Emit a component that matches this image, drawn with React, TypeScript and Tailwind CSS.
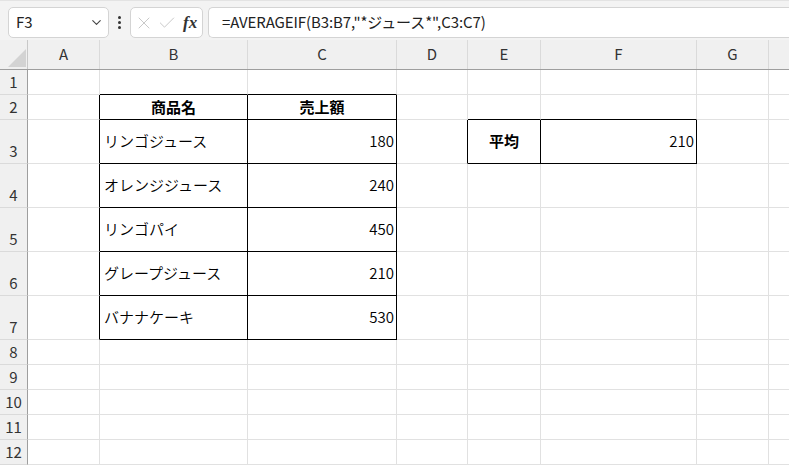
import { ChevronDown, X, Check } from "lucide-react";

const COLS = ["A", "B", "C", "D", "E", "F", "G", ""];
const COL_W = [72, 148, 149, 71, 73, 156, 72, 40];
const ROW_H = [25, 25, 44, 44, 44, 44, 44, 25, 25, 25, 25, 25];

type Cell = { text: string; align: "left" | "right" | "center"; bold?: boolean };

const DATA: Record<string, Cell> = {
  "B2": { text: "商品名", align: "center", bold: true },
  "C2": { text: "売上額", align: "center", bold: true },
  "B3": { text: "リンゴジュース", align: "left" },
  "C3": { text: "180", align: "right" },
  "B4": { text: "オレンジジュース", align: "left" },
  "C4": { text: "240", align: "right" },
  "B5": { text: "リンゴパイ", align: "left" },
  "C5": { text: "450", align: "right" },
  "B6": { text: "グレープジュース", align: "left" },
  "C6": { text: "210", align: "right" },
  "B7": { text: "バナナケーキ", align: "left" },
  "C7": { text: "530", align: "right" },
  "E3": { text: "平均", align: "center", bold: true },
  "F3": { text: "210", align: "right" },
};

// boxes with thin black borders: [colStart, colEnd, rowStart, rowEnd] (0-based col, 1-based row)
const BOXES = [
  [1, 2, 2, 7],
  [4, 5, 3, 3],
];

function inBox(c: number, r: number) {
  return BOXES.some(([c0, c1, r0, r1]) => c >= c0 && c <= c1 && r >= r0 && r <= r1);
}

function Toolbar() {
  return (
    <div className="flex h-[40px] items-start border-t border-[#e3e3e3] bg-[#f3f3f3] pt-[6px]">
      <div className="ml-[8px] flex h-[31px] w-[101px] items-center justify-between rounded-[5px] border border-[#d4d4d4] bg-white pl-[7px] pr-[4px]">
        <span className="text-[15px] text-[#222]">F3</span>
        <ChevronDown className="h-[15px] w-[15px] text-[#444]" strokeWidth={1.8} />
      </div>
      <div className="flex h-[31px] w-[21px] flex-col items-center justify-center gap-[2px]">
        <span className="h-[3px] w-[3px] rounded-full bg-[#333]" />
        <span className="h-[3px] w-[3px] rounded-full bg-[#333]" />
        <span className="h-[3px] w-[3px] rounded-full bg-[#333]" />
      </div>
      <div className="flex h-[31px] w-[73px] items-center gap-[3px] rounded-[5px] border border-[#d4d4d4] bg-white pl-[3px]">
        <X className="h-[20px] w-[20px] text-[#c4c4c4]" strokeWidth={1.1} />
        <Check className="h-[20px] w-[20px] text-[#c4c4c4]" strokeWidth={1.1} />
        <span className="ml-[3px] font-['Liberation_Serif',serif] text-[17px] font-bold italic text-[#333]">fx</span>
      </div>
      <div className="ml-[5px] flex h-[31px] flex-1 items-center rounded-l-[5px] border border-r-0 border-[#d4d4d4] bg-white pl-[13px]">
        <span className="text-[15px] tracking-[-0.1px] text-[#222]">=AVERAGEIF(B3:B7,"*ジュース*",C3:C7)</span>
      </div>
    </div>
  );
}

function ColumnHeader() {
  return (
    <div className="flex h-[30px] border-b border-[#9e9e9e] bg-[#f0f0f0]">
      <div className="relative w-[28px] shrink-0 border-r border-[#c8c8c8]">
        <svg className="absolute left-[8px] top-[9px]" width="18" height="18" viewBox="0 0 18 18">
          <polygon points="18,0 18,18 0,18" fill="#d3d3d3" />
        </svg>
      </div>
      {COLS.map((c, i) => (
        <div
          key={i}
          style={{ width: COL_W[i] }}
          className="flex shrink-0 items-center justify-center border-r border-[#dadada] text-[15px] text-[#333]"
        >
          {c}
        </div>
      ))}
    </div>
  );
}

function Row({ r, h }: { r: number; h: number }) {
  return (
    <div className="flex" style={{ height: h }}>
      <div className="flex w-[28px] shrink-0 items-end justify-center border-r border-b border-r-[#9e9e9e] border-b-[#dadada] bg-[#f0f0f0] pb-[1px] text-[15px] leading-[22px] text-[#333]">
        {r}
      </div>
      {COLS.map((c, ci) => {
        const cell = DATA[`${c}${r}`];
        const right = inBox(ci, r) || inBox(ci + 1, r);
        const bottom = inBox(ci, r) || inBox(ci, r + 1);
        return (
          <div
            key={ci}
            style={{ width: COL_W[ci] }}
            className={`flex shrink-0 items-center overflow-hidden whitespace-nowrap border-r border-b text-[15px] text-black ${
              right ? "border-r-black" : "border-r-[#e1e1e1]"
            } ${bottom ? "border-b-black" : "border-b-[#e1e1e1]"} ${
              cell?.align === "right" ? "justify-end pr-[2px]" : cell?.align === "center" ? "justify-center" : "pl-[4px]"
            } ${cell?.bold ? "font-bold" : "font-[350]"}`}
          >
            {cell?.text}
          </div>
        );
      })}
    </div>
  );
}

export default function App() {
  return (
    <div className="h-[465px] w-[789px] overflow-hidden bg-white font-['Noto_Sans_CJK_JP','Noto_Sans',sans-serif]">
      <Toolbar />
      <ColumnHeader />
      {ROW_H.map((h, i) => (
        <Row key={i} r={i + 1} h={h} />
      ))}
    </div>
  );
}
